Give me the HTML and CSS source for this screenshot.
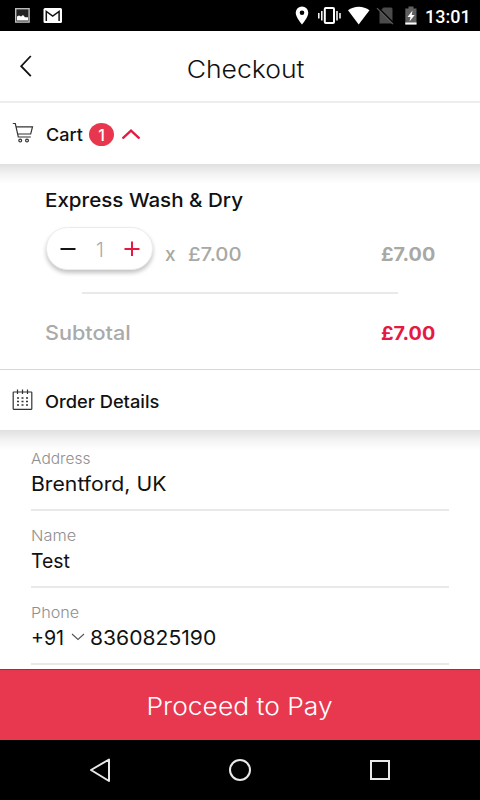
FILE: index.html
```html
<!DOCTYPE html>
<html lang="en">
<head>
<meta charset="utf-8">
<title>Checkout</title>
<link rel="stylesheet" href="styles.css">
</head>
<body>
<div class="screen">
  <div class="status">
    <svg class="status-left" width="64" height="31" viewBox="0 0 64 31">
      <rect x="15.700" y="8.700" width="13.400" height="13.400" fill="#222" stroke="#bdbdbd" stroke-width="1.400"/>
      <path d="M17 20.500v-4l2-1 2 1 2-1.500 2 2.200h3v3.300z" fill="#fff"/>
      <rect x="43.500" y="8" width="18.500" height="15" rx="1.500" fill="#fff"/>
      <path d="M46.300 21V11.500l6.400 4.500 6.400-4.500V21" fill="none" stroke="#111" stroke-width="1.500"/>
    </svg>
    <svg class="status-right" width="130" height="31" viewBox="290 0 130 31">
      <path fill-rule="evenodd" d="M302 6.500a6.300 6.300 0 0 0-6.300 6.300c0 4.700 6.300 11.700 6.300 11.700s6.300-7 6.300-11.700a6.300 6.300 0 0 0-6.300-6.300zm0 4a2.300 2.300 0 1 1 0 4.600 2.300 2.300 0 0 1 0-4.600z" fill="#fff"/>
      <rect x="324.800" y="8" width="9.200" height="15" rx="1" fill="none" stroke="#fff" stroke-width="2"/>
      <path d="M321.800 11v9.500M337 11v9.500M318.800 13v5.500M340 13v5.500" stroke="#fff" stroke-width="1.500"/>
      <path d="M348 10.300c6-4.700 15.500-4.700 21.500 0L358.700 24.500z" fill="#fff"/>
      <path d="M383.500 7.500H391a1.500 1.500 0 0 1 1.500 1.500v14.500h-13V11.500z" fill="#4b4b4b"/>
      <path d="M378.500 8l15.800 15.700" stroke="#000" stroke-width="1.500"/>
      <path d="M377 8.200l16 16" stroke="#5b5b5b" stroke-width="1.200"/>
      <path d="M408.500 6.500h5v2h3v16h-11.200v-16h3.200z" fill="#606060"/>
      <path d="M405.300 22.500h11.200v2h-11.200z" fill="#fff"/>
      <path d="M412.500 10.500l-5 6.500h3l-1 4.500 5.200-6.500h-3z" fill="#fff"/>
    </svg>
    <span class="clock">13:01</span>
  </div>

  <header class="header">
    <svg class="back" width="14" height="24" viewBox="0 0 14 24"><path d="M11.800 2L2.200 12.200l9.600 10" fill="none" stroke="#111" stroke-width="1.800"/></svg>
    <h1 class="title">Checkout</h1>
  </header>

  <section class="bar bar-cart">
    <svg class="bar-icon" width="22" height="22" viewBox="0 0 22 22" fill="none" stroke="#333" stroke-width="1.200">
      <path d="M.8 1.500h2.500l3 13.500h12.500M4 4.800h16.500l-1.800 7.200H5.600"/>
      <circle cx="8.200" cy="18.600" r="1.400"/><circle cx="15" cy="18.600" r="1.400"/>
    </svg>
    <span class="bar-label cart-label">Cart</span>
    <span class="badge">1</span>
    <svg class="chev-up" width="18" height="12" viewBox="0 0 18 12"><path d="M1.200 9.800L9 2.600l7.800 7.200" fill="none" stroke="#e51941" stroke-width="2.300" stroke-linecap="round"/></svg>
  </section>

  <section class="cart">
    <h2 class="product">Express Wash &amp; Dry</h2>
    <div class="line">
      <div class="stepper">
        <svg width="16" height="16" viewBox="0 0 16 16"><path d="M.5 9h15" stroke="#151515" stroke-width="2"/></svg>
        <span class="count">1</span>
        <svg width="16" height="16" viewBox="0 0 16 16"><path d="M.5 9h15M8 1.500v15" stroke="#e51941" stroke-width="2"/></svg>
      </div>
      <span class="times">x</span>
      <span class="unit">£7.00</span>
      <span class="price">£7.00</span>
    </div>
    <div class="divider"></div>
    <div class="subtotal"><span class="sub-label">Subtotal</span><span class="price total">£7.00</span></div>
  </section>

  <section class="bar bar-order">
    <svg class="bar-icon cal" width="22" height="22" viewBox="0 0 22 22" fill="none" stroke="#333" stroke-width="1.200">
      <rect x="1.200" y="3" width="18.600" height="17.300" rx=".5"/>
      <path d="M5.500.5v4.500M10.500.5v4.500M15.500.5v4.500"/>
      <path d="M5 9h11.500M5 12.500h11.500M5 16h11.500" stroke-width="1.700" stroke-dasharray="2 2.500"/>
    </svg>
    <span class="bar-label order-label">Order Details</span>
  </section>

  <main class="form">
    <div class="field"><label class="label address-label">Address</label><div class="value address">Brentford, UK</div></div>
    <div class="field"><label class="label name-label">Name</label><div class="value name">Test</div></div>
    <div class="field"><label class="label phone-label">Phone</label>
      <div class="value phone"><span class="code">+91</span><svg class="chev-down" width="14" height="8" viewBox="0 0 14 8"><path d="M1 1l6 5.500L13 1" fill="none" stroke="#555" stroke-width="1.100"/></svg><span class="number">8360825190</span></div>
    </div>
  </main>

  <button class="pay"><span class="pay-text">Proceed to Pay</span></button>

  <nav class="nav">
    <svg width="480" height="60" viewBox="0 0 480 60" fill="none" stroke="#e8e8e8" stroke-width="2">
      <path d="M109 19.500v21.500L91 30z" stroke-linejoin="round"/>
      <circle cx="240" cy="30" r="10"/>
      <rect x="371" y="21" width="18" height="18"/>
    </svg>
  </nav>
</div>
</body>
</html>
```

FILE: styles.css
```css
* { box-sizing: border-box; }
body { margin: 0; background: #fff; font-family: Inter, "Open Sans", sans-serif; color: #111; }
h1, h2 { margin: 0; }
span, label, h1, h2, .value { white-space: nowrap; }
svg { display: block; flex: none; }
.screen { width: 480px; height: 800px; display: flex; flex-direction: column; overflow: hidden; }
.screen > * { flex: none; }
.status { height: 31px; background: #000; display: flex; justify-content: space-between; }
.status-right { margin-left: auto; }
.clock { width: 60px; padding-left: 5px; font: 500 18px/33px Roboto, sans-serif; color: #fff; }
.header { height: 72px; border-bottom: 2px solid #ededed; display: grid; grid-template-columns: 60px 1fr 60px; }
.back { margin: 23px 0 0 19px; }
.title { font-weight: 350; font-size: 24px; line-height: 77px; height: 70px; text-align: center; padding-left: 10px; transform: scaleX(1.105); }
.bar { display: flex; align-items: center; padding-left: 12px; }
.bar-cart { height: 61px; padding-top: 1px; }
.bar-order { height: 61px; border-top: 1px solid #d8d8d8; }
.bar-icon { margin-bottom: 2px; }
.cal { margin-bottom: 1px; }
.bar-label { font-weight: 500; font-size: 17px; line-height: 24px; padding-top: 2px; transform-origin: left; }
.cart-label { margin-left: 12px; width: 43px; transform: scaleX(1.06); }
.order-label { margin: 2px 0 0 11px; transform: scaleX(1.075); }
.badge { width: 25px; height: 23px; border-radius: 50%; background: #e8364e; color: #fff; font-weight: 500; font-size: 16px; line-height: 24px; text-align: center; }
.chev-up { margin-left: 8px; }
.cart { height: 205px; padding: 23px 45px 0; background: linear-gradient(#e0e0e0, #f3f3f3 10px, #fff 20px) no-repeat 0 0 / 100% 20px; }
.product { font-weight: 500; font-size: 19px; line-height: 28px; transform: scaleX(1.083); transform-origin: left; }
.line { display: flex; align-items: center; height: 44px; margin-top: 11px; }
.stepper { width: 107px; height: 43px; margin: 0 1px; border-radius: 22px; background: #fff; border: 1px solid #ececec; box-shadow: 0 3px 4px rgba(0,0,0,.24); display: flex; align-items: center; justify-content: space-between; padding: 0 12px 0 13px; }
.count { color: #aaa; font-weight: 300; font-size: 20px; padding-top: 4px; }
.times { color: #a8a8a4; font-weight: 500; font-size: 19px; margin: 13px 0 0 11px; width: 24px; }
.unit { color: #a8a8a4; font-weight: 500; font-size: 19px; margin: 13px 0 0 -1px; transform: scaleX(1.07); transform-origin: left; }
.price { color: #a8a8a4; font-weight: 700; font-size: 19px; margin: 13px 0 0 auto; transform: scaleX(1.04); transform-origin: right; }
.divider { height: 2px; margin: 22px 37px 0; background: #e9e9e9; }
.subtotal { display: flex; margin-top: 27px; line-height: 26px; }
.sub-label { color: #aaa; font-weight: 500; font-size: 20px; line-height: 25px; transform: scaleX(1.08); transform-origin: left; }
.total { color: #e51941; margin-top: 0; }
.form { height: 239px; padding: 20px 31px 0; background: linear-gradient(#e0e0e0, #f3f3f3 10px, #fff 20px) no-repeat 0 0 / 100% 20px; }
.field { height: 61px; margin-bottom: 16px; border-bottom: 2px solid #e9e9e9; }
.label { display: block; color: #8f8f8f; font-weight: 300; font-size: 15px; line-height: 18px; transform-origin: left; }
.address-label { transform: scaleX(1.035); }
.name-label { transform: scaleX(1.09); }
.phone-label { transform: scaleX(1.08); }
.value { font-weight: 370; font-size: 20px; line-height: 33px; transform-origin: left; }
.address { transform: scaleX(1.06); }
.name { transform: scaleX(.97); }
.phone { display: flex; align-items: center; }
.code { width: 40px; transform: scaleX(.98); transform-origin: left; }
.chev-down { margin-bottom: 3px; }
.number { margin-left: 5px; transform: scaleX(1.055); transform-origin: left; }
.pay { height: 71px; border: 0; border-top: 1px solid #d41343; background: #e8384f; color: #fff; font-family: inherit; font-weight: 350; font-size: 24px; line-height: 70px; padding: 2px 0 0; text-align: center; }
.pay-text { display: inline-block; transform: scaleX(1.1); }
.nav { height: 60px; background: #000; }
```
